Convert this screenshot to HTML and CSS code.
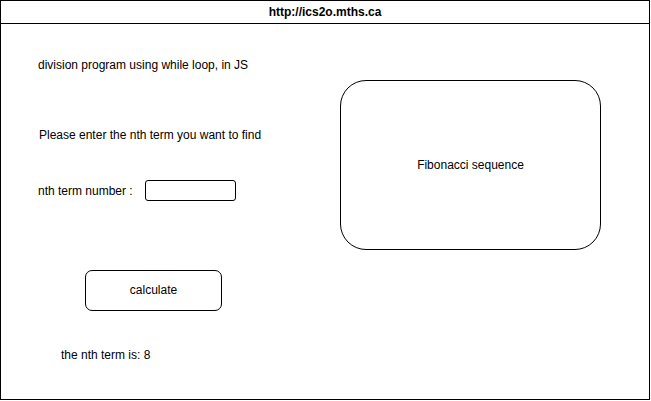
FILE: index.html
```html
<!DOCTYPE html>
<html lang="en">
<head>
  <meta charset="UTF-8" />
  <meta name="viewport" content="width=device-width, initial-scale=1.0"/>
  <title>Fibonacci sequence</title>
  <link rel="stylesheet" href="styles.css">
</head>
<body>

  <div class="frame">
    <div class="url-bar">http://ics2o.mths.ca</div>

    <div class="content">
      <div class="left">
        <p class="title">division program using while loop, in JS</p>
        <p class="prompt">Please enter the nth term you want to find</p>

        <div class="input-row">
          <label for="term">nth term number :</label>
          <input type="text" id="term" class="term-input">
        </div>

        <button class="calc-btn">calculate</button>

        <p class="result">the nth term is: 8</p>
      </div>

      <div class="fib-box">Fibonacci sequence</div>
    </div>
  </div>

</body>
</html>
```

FILE: styles.css
```css
* {
  margin: 0;
  padding: 0;
  box-sizing: border-box;
}

body {
  font-family: 'Liberation Sans', Arial, sans-serif;
  font-size: 12px;
  line-height: 14px;
  color: #000;
  background: #fff;
}

.frame {
  width: 650px;
  height: 400px;
  border: 1px solid #000;
}

.url-bar {
  height: 23px;
  border-bottom: 1px solid #000;
  text-align: center;
  font-weight: bold;
  line-height: 22px;
}

.content {
  display: flex;
  padding-left: 37px;
}

.left {
  width: 302px;
}

.title {
  margin-top: 34px;
}

.prompt {
  margin-top: 56px;
  padding-left: 1px;
}

.input-row {
  display: flex;
  align-items: center;
  margin-top: 38px;
}

.input-row label {
  width: 107px;
}

.term-input {
  width: 91px;
  height: 21px;
  border: 1px solid #000;
  border-radius: 3px;
  outline: none;
}

.calc-btn {
  display: block;
  width: 137px;
  height: 41px;
  margin: 69px 0 0 47px;
  border: 1px solid #000;
  border-radius: 7px;
  background: #fff;
  font-family: inherit;
  font-size: 12px;
  line-height: 14px;
  padding-bottom: 1px;
  color: #000;
}

.result {
  margin: 37px 0 0 23px;
}

.fib-box {
  width: 261px;
  height: 170px;
  margin-top: 56px;
  border: 1px solid #000;
  border-radius: 26px;
  display: flex;
  align-items: center;
  justify-content: center;
}
```
